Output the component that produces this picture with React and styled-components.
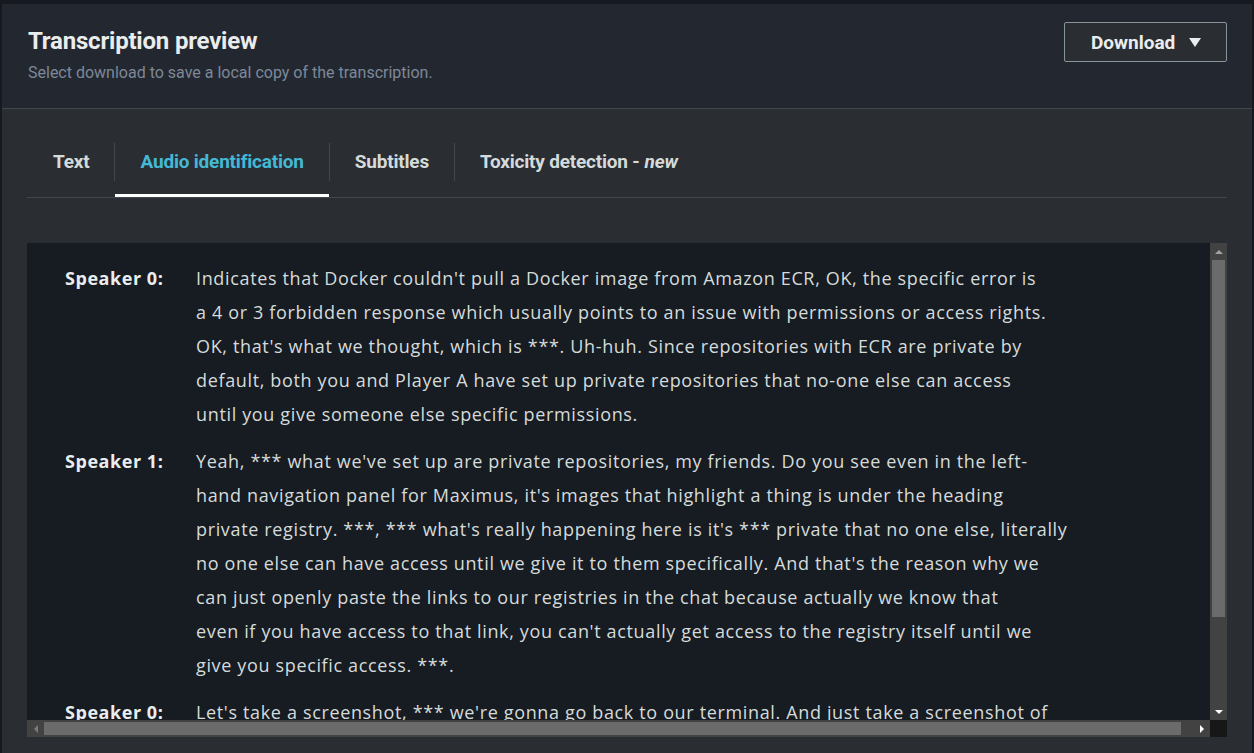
import React, {useState} from 'react';
import styled, {createGlobalStyle, css} from 'styled-components';

const GlobalStyle = createGlobalStyle`
   html, body {
      margin: 0;
      padding: 0;
      background: #16191f;
      overflow: hidden;
   }
   * {
      box-sizing: border-box;
   }
`;

const Page = styled.div`
   padding: 4px 2px 0 2px;
   height: 100vh;
`;

const Panel = styled.section`
   display: flex;
   flex-direction: column;
   height: 100%;
   background: #2a2e33;
   font-family: Roboto, "Liberation Sans", sans-serif;
`;

const Header = styled.header`
   display: flex;
   justify-content: space-between;
   align-items: flex-start;
   height: 105px;
   padding: 18px 25px 0 26px;
   background: #232730;
   border-bottom: 1px solid #414750;
`;

const TitleBlock = styled.div`
   display: flex;
   flex-direction: column;
   padding-top: 4px;
`;

const Title = styled.h2`
   margin: 0;
   font-size: 24px;
   line-height: 30px;
   font-weight: 700;
   color: #eaeded;
   letter-spacing: -0.2px;
`;

const Subtitle = styled.div`
   margin-top: 6px;
   font-size: 16px;
   line-height: 22px;
   color: #7d8998;
`;

const DownloadButton = styled.button`
   display: flex;
   align-items: center;
   gap: 14px;
   height: 40px;
   width: 163px;
   padding: 0 0 0 26px;
   background: #2a2e33;
   border: 1px solid #879596;
   border-radius: 2px;
   color: #eaeded;
   font-family: Roboto, "Liberation Sans", sans-serif;
   font-weight: 700;
   font-size: 19px;
   cursor: pointer;
`;

const Caret = styled.span`
   width: 0;
   height: 0;
   border-left: 6px solid transparent;
   border-right: 6px solid transparent;
   border-top: 9px solid #eaeded;
`;

const Body = styled.div`
   flex: 1;
   display: flex;
   flex-direction: column;
   padding: 31px 25px 0 25px;
   min-height: 0;
`;

const TabList = styled.div`
   display: flex;
   height: 58px;
   border-bottom: 1px solid #414750;
`;

const Tab = styled.button`
   position: relative;
   display: flex;
   align-items: center;
   height: 57px;
   padding: 0 25px 15px 26px;
   background: none;
   border: none;
   font-family: Roboto, "Liberation Sans", sans-serif;
   font-weight: 700;
   font-size: 19px;
   letter-spacing: -0.2px;
   color: ${p => p.$active ? '#44b9d6' : '#d5dbdb'};
   cursor: pointer;
   ${p => !p.$first && css`
      &::before {
         content: '';
         position: absolute;
         left: 0;
         top: 3px;
         bottom: 16px;
         width: 1px;
         background: #414750;
      }
   `}
   ${p => p.$active && css`
      &::after {
         content: '';
         position: absolute;
         left: 1px;
         right: 0;
         bottom: 0;
         height: 3px;
         background: #ffffff;
      }
   `}
   em {
      margin-left: 5px;
      font-style: italic;
   }
`;

const TranscriptBox = styled.div`
   display: grid;
   grid-template-columns: 1fr 17px;
   grid-template-rows: 1fr 17px;
   height: 494px;
   margin-top: 45px;
   background: #171b22;
`;

const Viewport = styled.div`
   overflow: hidden;
   min-width: 0;
   min-height: 0;
`;

const ScrollBar = styled.div`
   display: flex;
   flex-direction: ${p => p.$vertical ? 'column' : 'row'};
   background: #424242;
`;

const ScrollButton = styled.div`
   flex: 0 0 17px;
   display: flex;
   align-items: center;
   justify-content: center;
`;

const Arrow = styled.span`
   width: 0;
   height: 0;
   ${p => p.$dir === 'up' && css`
      border-left: 4px solid transparent;
      border-right: 4px solid transparent;
      border-bottom: 4px solid ${p.$color};
   `}
   ${p => p.$dir === 'down' && css`
      border-left: 4px solid transparent;
      border-right: 4px solid transparent;
      border-top: 4px solid ${p.$color};
   `}
   ${p => p.$dir === 'left' && css`
      border-top: 4px solid transparent;
      border-bottom: 4px solid transparent;
      border-right: 4px solid ${p.$color};
   `}
   ${p => p.$dir === 'right' && css`
      border-top: 4px solid transparent;
      border-bottom: 4px solid transparent;
      border-left: 4px solid ${p.$color};
   `}
`;

const Track = styled.div`
   flex: 1;
   display: flex;
   flex-direction: ${p => p.$vertical ? 'column' : 'row'};
   padding: ${p => p.$vertical ? '0 2px' : '2px 0'};
`;

const Thumb = styled.div`
   background: #6b6b6b;
`;

const Corner = styled.div`
   background: #171717;
`;

const Transcript = styled.div`
   display: flex;
   flex-direction: column;
   gap: 13px;
   width: 1195px;
   padding: 18px 0 18px 38px;
   font-family: "Open Sans", "Noto Sans", sans-serif;
   font-size: 18px;
   line-height: 34px;
   letter-spacing: 0.65px;
`;

const Segment = styled.div`
   display: grid;
   grid-template-columns: 131px 1fr;
`;

const Speaker = styled.div`
   font-weight: 700;
   color: #eaeded;
   letter-spacing: 0.55px;
`;

const Words = styled.div`
   color: #d5dbdb;
`;

const Line = styled.div`
   white-space: nowrap;
`;

const segments = [
   {
      speaker: 'Speaker 0:',
      lines: [
         "Indicates that Docker couldn't pull a Docker image from Amazon ECR, OK, the specific error is",
         "a 4 or 3 forbidden response which usually points to an issue with permissions or access rights.",
         "OK, that's what we thought, which is ***. Uh-huh. Since repositories with ECR are private by",
         "default, both you and Player A have set up private repositories that no-one else can access",
         "until you give someone else specific permissions.",
      ],
   },
   {
      speaker: 'Speaker 1:',
      lines: [
         "Yeah, *** what we've set up are private repositories, my friends. Do you see even in the left-",
         "hand navigation panel for Maximus, it's images that highlight a thing is under the heading",
         "private registry. ***, *** what's really happening here is it's *** private that no one else, literally",
         "no one else can have access until we give it to them specifically. And that's the reason why we",
         "can just openly paste the links to our registries in the chat because actually we know that",
         "even if you have access to that link, you can't actually get access to the registry itself until we",
         "give you specific access. ***.",
      ],
   },
   {
      speaker: 'Speaker 0:',
      lines: [
         "Let's take a screenshot, *** we're gonna go back to our terminal. And just take a screenshot of",
         "that error message so that we can share it with the rest of the team, and then we'll look at",
         "the repository permissions together.",
      ],
   },
];

const tabs = [
   {id: 'text', label: 'Text'},
   {id: 'audio', label: 'Audio identification'},
   {id: 'subtitles', label: 'Subtitles'},
   {id: 'toxicity', label: 'Toxicity detection -', tag: 'new'},
];

export default function App() {
   const [active, setActive] = useState('audio');
   return <Page>
      <GlobalStyle/>
      <Panel>
         <Header>
            <TitleBlock>
               <Title>Transcription preview</Title>
               <Subtitle>Select download to save a local copy of the transcription.</Subtitle>
            </TitleBlock>
            <DownloadButton>
               Download
               <Caret/>
            </DownloadButton>
         </Header>
         <Body>
            <TabList>
               {tabs.map((tab, i) => <Tab
                  key={tab.id}
                  $first={i === 0}
                  $active={tab.id === active}
                  onClick={() => setActive(tab.id)}
               >
                  {tab.label}
                  {tab.tag && <em>{tab.tag}</em>}
               </Tab>)}
            </TabList>
            <TranscriptBox>
               <Viewport>
                  <Transcript>
                     {segments.map((seg, i) => <Segment key={i}>
                        <Speaker>{seg.speaker}</Speaker>
                        <Words>
                           {seg.lines.map((line, j) => <Line key={j}>{line}</Line>)}
                        </Words>
                     </Segment>)}
                  </Transcript>
               </Viewport>
               <ScrollBar $vertical>
                  <ScrollButton><Arrow $dir="up" $color="#a3a3a3"/></ScrollButton>
                  <Track $vertical>
                     <Thumb style={{height: 357}}/>
                  </Track>
                  <ScrollButton><Arrow $dir="down" $color="#ffffff"/></ScrollButton>
               </ScrollBar>
               <ScrollBar>
                  <ScrollButton><Arrow $dir="left" $color="#7a7a7a"/></ScrollButton>
                  <Track>
                     <Thumb style={{width: 1137}}/>
                  </Track>
                  <ScrollButton><Arrow $dir="right" $color="#ffffff"/></ScrollButton>
               </ScrollBar>
               <Corner/>
            </TranscriptBox>
         </Body>
      </Panel>
   </Page>
}
